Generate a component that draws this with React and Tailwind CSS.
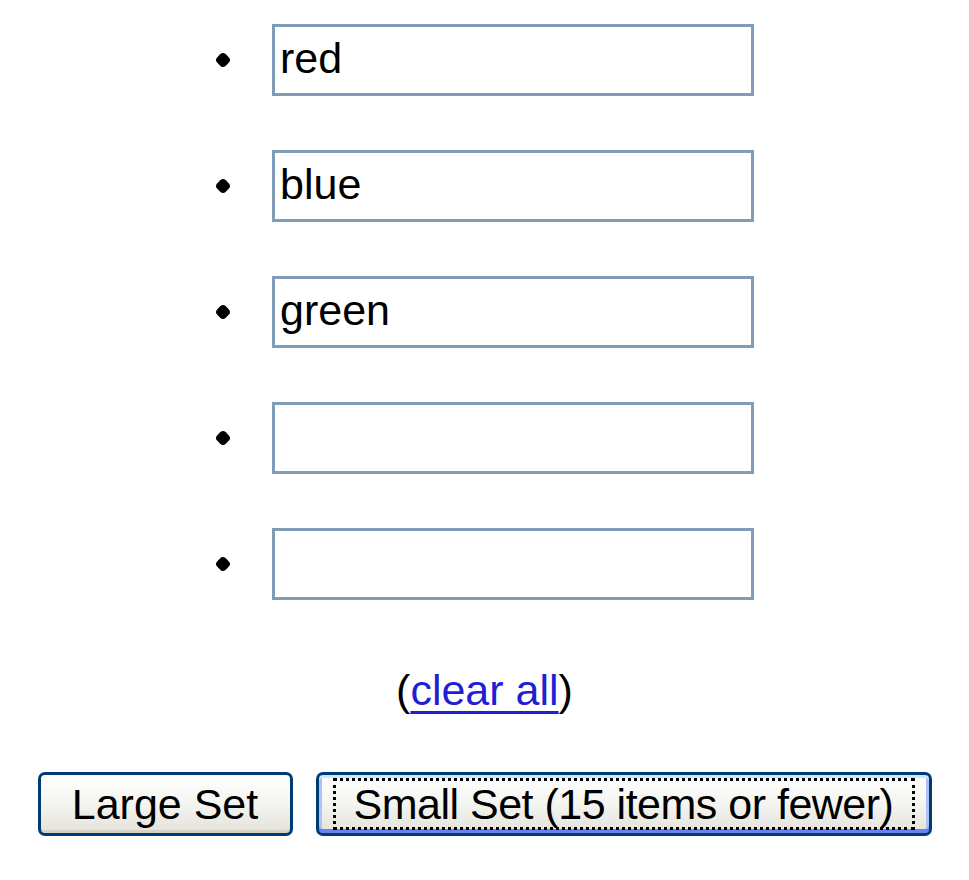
import React, { useState } from 'react';

const App = () => {
  const [items, setItems] = useState(['red', 'blue', 'green', '', '']);

  const updateItem = (i, value) => {
    const next = [...items];
    next[i] = value;
    setItems(next);
  };

  const clearAll = (e) => {
    e.preventDefault();
    setItems(['', '', '', '', '']);
  };

  return (
    <div className="min-h-screen bg-white font-['Liberation_Sans',Arial,sans-serif] text-[43px] text-black">
      <ul className="flex flex-col gap-[54px] pt-[24px] pl-[214px]">
        {items.map((item, i) => (
          <li key={i} className="flex items-center">
            <span className="flex w-[17px] h-[17px] items-center justify-center">
              <span className="w-[12px] h-[12px] rotate-45 rounded-[4px] bg-black" />
            </span>
            <input
              type="text"
              value={item}
              onChange={(e) => updateItem(i, e.target.value)}
              className="ml-[41px] w-[482px] h-[72px] border-[3px] border-[#7f9db9] bg-white px-[5px] pb-[3px] text-[43px] leading-none text-black outline-none"
            />
          </li>
        ))}
      </ul>

      <div className="mt-[66px] text-center leading-[48px]">
        (<a href="#" onClick={clearAll} className="text-[#1f1fd6] underline decoration-[3px] underline-offset-[6px]">clear all</a>)
      </div>

      <div className="mt-[58px] flex justify-center gap-[23px]">
        <button className="h-[64px] w-[255px] rounded-[7px] border-[3px] border-[#003c74] bg-gradient-to-b from-white via-[#f4f4f0] to-[#e3e2da] text-[43px] leading-none text-black shadow-[inset_0_-3px_0_#d6d0c5]">
          Large Set
        </button>
        <button className="flex h-[64px] w-[616px] items-center justify-center rounded-[7px] border-[3px] border-[#003c74] bg-gradient-to-b from-white via-[#f4f4f0] to-[#e3e2da] text-[43px] leading-none text-black shadow-[inset_0_3px_0_#cee7ff,inset_0_-4px_0_#6982ee,inset_3px_0_0_#a9c4f5,inset_-3px_0_0_#a9c4f5]">
          <span className="flex h-[52px] w-[582px] items-center justify-center border-[3px] border-dotted border-black tracking-[-0.5px]">
            Small Set (15 items or fewer)
          </span>
        </button>
      </div>
    </div>
  );
};

export default App;
